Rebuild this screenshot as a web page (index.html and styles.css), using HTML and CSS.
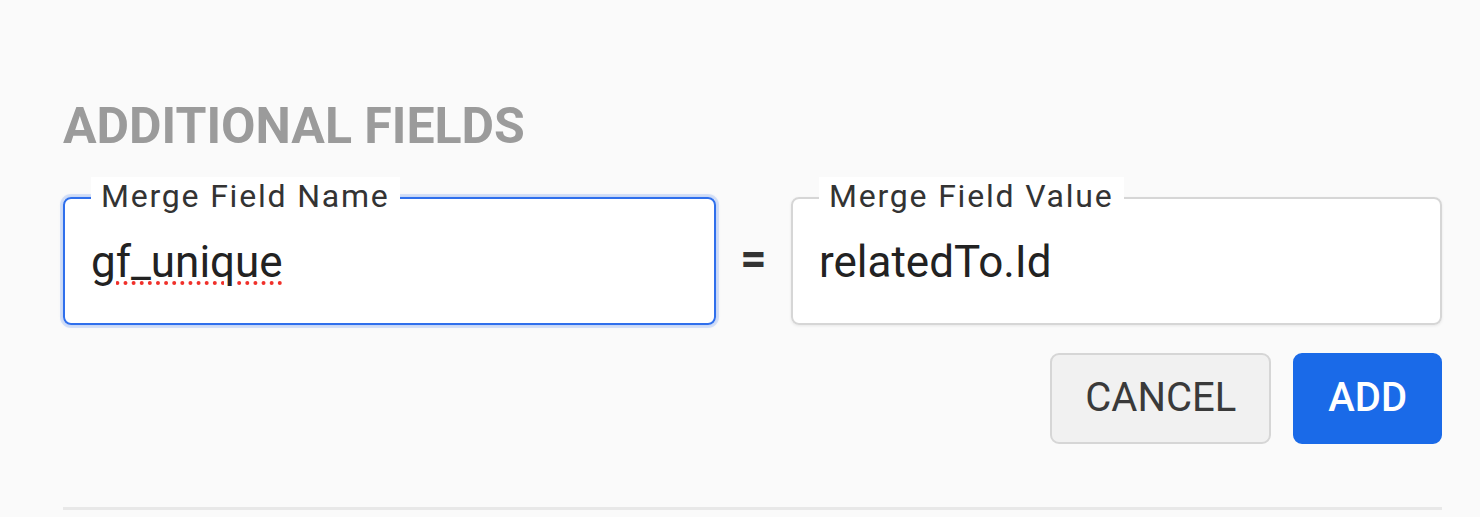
FILE: index.html
```html
<!DOCTYPE html>
<html lang="en">
<head>
<meta charset="utf-8">
<title>Additional Fields</title>
<link rel="stylesheet" href="styles.css">
</head>
<body>
<main class="panel">
  <h2 class="section-title">ADDITIONAL FIELDS</h2>
  <div class="field-row">
    <fieldset class="field field--focused">
      <legend class="field-label">Merge Field Name</legend>
      <div class="field-value"><span class="misspelled">gf_unique</span></div>
    </fieldset>
    <span class="equals">=</span>
    <fieldset class="field">
      <legend class="field-label">Merge Field Value</legend>
      <div class="field-value">relatedTo.Id</div>
    </fieldset>
  </div>
  <div class="actions">
    <button class="btn btn--secondary" type="button">CANCEL</button>
    <button class="btn btn--primary" type="button">ADD</button>
  </div>
  <hr class="divider">
</main>
</body>
</html>
```
FILE: styles.css
```css
html, body {
  margin: 0;
  padding: 0;
  background: #fafafa;
}

body {
  font-family: Roboto, "Liberation Sans", Arial, sans-serif;
  color: #222;
}

.panel {
  width: 1379px;
  padding: 100px 0 0 63px;
  box-sizing: content-box;
}

.section-title {
  margin: 0 0 25px;
  font-size: 50px;
  line-height: 52px;
  font-weight: 700;
  color: #9b9b9b;
  letter-spacing: 0;
}

.field-row {
  display: grid;
  grid-template-columns: 653px 1fr 651px;
  align-items: end;
}

.field {
  margin: 0;
  min-width: 0;
  padding: 17px 26px 35px;
  border: 2px solid #d6d6d6;
  border-radius: 8px;
  background: #fff;
  box-shadow: 0 1px 3px rgba(0, 0, 0, 0.08);
}

.field--focused {
  border-color: #2f6fec;
  box-shadow: 0 0 0 3px rgba(47, 111, 236, 0.16), 0 0 4px rgba(47, 111, 236, 0.25);
}

.field-label {
  padding: 3px 10px 7px;
  margin: 0;
  font-size: 32px;
  line-height: 32px;
  letter-spacing: 1.8px;
  color: #333;
  background: #fff;
}

.field-value {
  font-size: 44px;
  line-height: 52px;
  color: #222;
  white-space: nowrap;
}

.misspelled {
  text-decoration: underline dotted #f0302a;
  text-decoration-thickness: 4px;
  text-underline-offset: 4px;
}

.equals {
  align-self: center;
  justify-self: center;
  font-size: 46px;
  line-height: 52px;
  font-weight: 700;
  color: #333;
  margin-top: 13px;
}

.actions {
  display: flex;
  justify-content: flex-end;
  gap: 22px;
  margin-top: 28px;
}

.btn {
  font-family: Roboto, "Liberation Sans", Arial, sans-serif;
  font-size: 40px;
  line-height: 47px;
  padding: 19px 33px 21px;
  border-radius: 9px;
  border: 2px solid transparent;
  cursor: pointer;
}

.btn--secondary {
  background: #f1f1f1;
  border-color: #d6d6d6;
  color: #3a3a3a;
}

.btn--primary {
  background: #1a6ae8;
  border-color: #1a6ae8;
  color: #fff;
  font-weight: 500;
}

.divider {
  margin: 63px 0 0;
  border: 0;
  height: 3px;
  background: #e8e8e8;
}
```
